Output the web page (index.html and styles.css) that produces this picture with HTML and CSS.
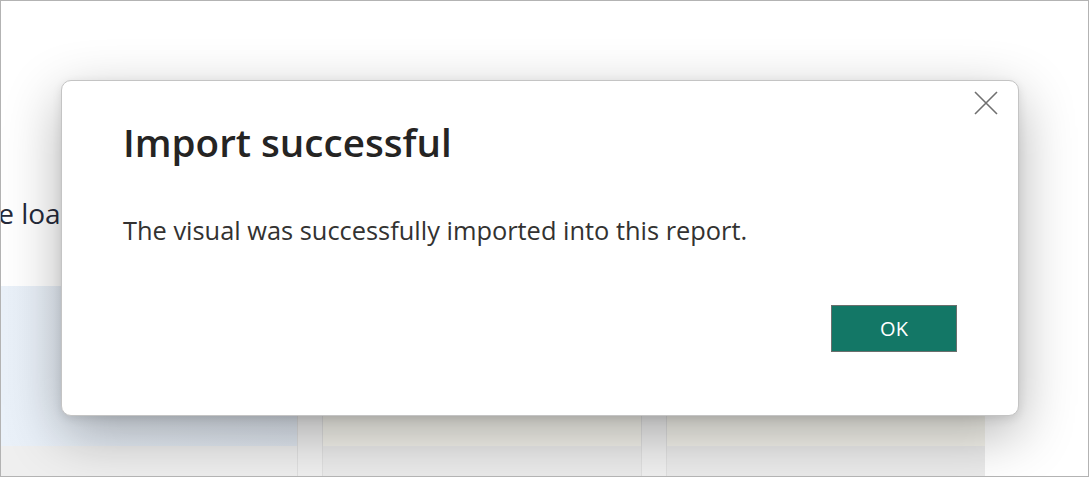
FILE: index.html
```html
<!DOCTYPE html>
<html lang="en">
<head>
<meta charset="utf-8">
<title>Import successful</title>
<link rel="stylesheet" href="styles.css">
</head>
<body>
<div class="frame">
  <div class="backdrop">
    <p class="bg-text">be loa</p>
    <div class="bg-row">
      <div class="bg-panel"></div>
      <div class="bg-gap"></div>
      <div class="bg-card"></div>
      <div class="bg-gap"></div>
      <div class="bg-card"></div>
      <div class="bg-rest"></div>
    </div>
  </div>

  <div class="dialog" role="dialog" aria-labelledby="dlg-title">
    <button class="close" aria-label="Close">
      <svg width="24" height="24" viewBox="0 0 24 24" aria-hidden="true">
        <path d="M1 1 L23 23 M23 1 L1 23" stroke="#707070" stroke-width="1.6" fill="none"/>
      </svg>
    </button>
    <h1 class="title" id="dlg-title">Import successful</h1>
    <p class="message">The visual was successfully imported into this report.</p>
    <div class="footer">
      <button class="ok">OK</button>
    </div>
  </div>
</div>
</body>
</html>
```
FILE: styles.css
```css
html, body {
  margin: 0;
  padding: 0;
  background: #ffffff;
}

.frame {
  position: relative;
  width: 1089px;
  height: 477px;
  box-sizing: border-box;
  border: 1px solid #b3b3b3;
  overflow: hidden;
  background: #ffffff;
  font-family: "Open Sans", "Noto Sans", sans-serif;
}

.backdrop {
  display: flex;
  flex-direction: column;
  height: 100%;
}

.bg-text {
  margin: 194px 0 0 -20px;
  font-size: 28px;
  line-height: 36px;
  color: #252a3a;
  white-space: nowrap;
}

.bg-row {
  display: flex;
  margin-top: 55px;
  flex: 1;
}

.bg-panel {
  width: 296px;
  background:
    linear-gradient(90deg, #eaf1f9, #e1e8f1) top / 100% 160px no-repeat,
    #efefef;
}

.bg-gap {
  width: 26px;
  background: #f0f0f0;
  border-left: 1px solid #e0e0e0;
  border-right: 1px solid #e0e0e0;
  box-sizing: border-box;
}

.bg-card {
  width: 318px;
  background:
    linear-gradient(#f4f3ec, #f4f3ec) top / 100% 160px no-repeat,
    #ebebeb;
}

.bg-rest {
  flex: 1;
  background: #ffffff;
}

.dialog {
  position: absolute;
  left: 60px;
  top: 79px;
  width: 958px;
  height: 336px;
  box-sizing: border-box;
  background: #ffffff;
  border: 1px solid #c4c4c4;
  border-radius: 10px;
  box-shadow: 0 18px 56px rgba(0, 0, 0, 0.3), 0 3px 10px rgba(0, 0, 0, 0.1);
  padding: 36px 61px 63px 61px;
  display: flex;
  flex-direction: column;
}

.close {
  position: absolute;
  top: 9px;
  right: 19px;
  width: 26px;
  height: 26px;
  padding: 1px;
  border: 0;
  background: transparent;
  display: flex;
  align-items: center;
  justify-content: center;
  cursor: pointer;
}

.title {
  margin: 0;
  font-size: 38.6px;
  font-weight: 600;
  line-height: 50px;
  color: #252423;
}

.message {
  margin: 46px 0 0 0;
  font-size: 25.4px;
  line-height: 34px;
  color: #333231;
}

.footer {
  margin-top: auto;
  display: flex;
  justify-content: flex-end;
}

.ok {
  width: 126px;
  height: 47px;
  box-sizing: border-box;
  background: #137766;
  border: 1px solid #6a6f6d;
  color: #ffffff;
  font-family: "Open Sans", "Noto Sans", sans-serif;
  font-size: 20px;
  padding: 0;
  cursor: pointer;
}
```
